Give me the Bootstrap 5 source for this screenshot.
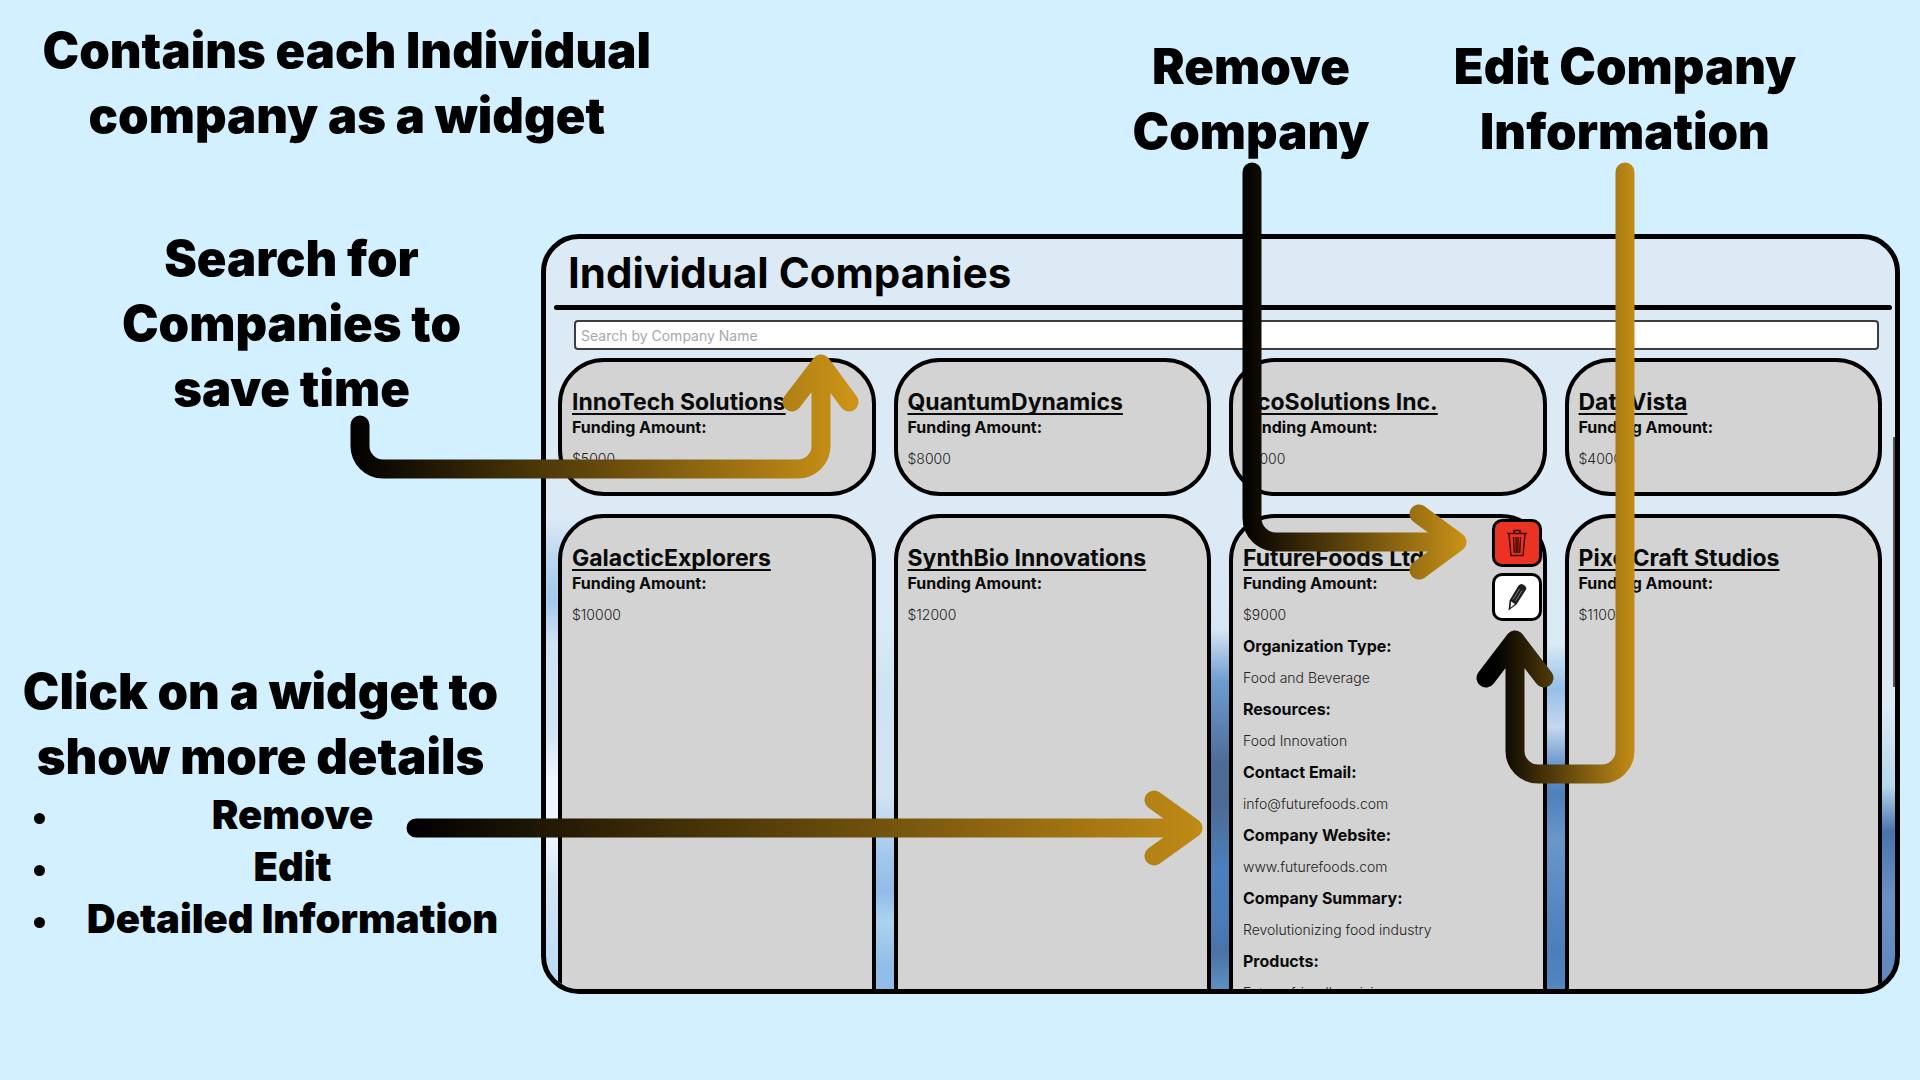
<!DOCTYPE html>
<html lang="en">
<head>
<meta charset="utf-8">
<meta name="viewport" content="width=device-width, initial-scale=1">
<title>Individual Companies guide</title>
<link href="https://cdn.jsdelivr.net/npm/bootstrap@5.3.0/dist/css/bootstrap.min.css" rel="stylesheet">
<style>
  body { background: #d2f0ff; color: #000; font-family: Inter, "Liberation Sans", sans-serif; }
  .callout { font-size: 49px; line-height: 65px; font-weight: 900; text-align: center; white-space: nowrap; margin: 0; }
  .guide-top { height: 226px; padding: 18px 95px 0 0; flex: none; }
  .guide-top .intro { width: 38%; }
  .guide-top .pointer { margin-top: 16px; }
  .guide-top .pointer-remove { width: 260px; }
  .guide-top .pointer-edit { width: 400px; margin-left: 44px; }
  .guide-main { min-height: 0; }
  .guide-notes { flex: 0 0 541px; }
  .note-search { padding-left: 42px; }
  .note-click { margin-top: 238px; padding-right: 20px; }
  .note-list { font-size: 40px; line-height: 52px; font-weight: 900; margin: 0; padding: 0 36px 0 80px; list-style: none; text-align: center; white-space: nowrap; }
  .note-list li { position: relative; }
  .note-list li::before { content: ""; position: absolute; left: -46px; top: 24px; width: 11px; height: 11px; border-radius: 50%; background: #000; }
  .app-panel {
    position: relative; margin: 8px 20px 86px 0; border: 5px solid #000; border-radius: 38px; overflow: hidden;
    background:
      linear-gradient(#dceaf5 0 37%, #b9d5f0 43%, #a5c8ec 48%, #cfe2f5 54%, #d3e4f6 66%, #edf5fe 72%, #edf5fe 80%, #d3e4f6 86%, #b8daf3) 0 0 / 20.1% 100% no-repeat,
      linear-gradient(#dceaf5 0 37%, #d8eaf4 52%, #cfe3f5 60%, #d3e3f4 74%, #a4c8ec 82%, #90bce7 87%, #acd3ee 91%, #90bce7 97%) 25% 0 / 20.1% 100% no-repeat,
      linear-gradient(#dceaf5 0 37%, #d6e6f4 52%, #6f9cd0 59%, #4d6c94 70%, #4d6c94 76%, #4a80bd 84%, #4a7cb9 91%, #4a72a8 95%, #5f8fc2) 50% 0 / 20.1% 100% no-repeat,
      linear-gradient(#dceaf5 0 37%, #d8eaf4 54%, #95bfe8 60%, #c5d8ee 65%, #6d98cc 70%, #4f80bb 74%, #6a96cb 80%, #4a7ebb 95%, #5486bf) 75% 0 / 20.1% 100% no-repeat,
      linear-gradient(#dceaf5 0 37%, #dceaf5 62%, #b5d7ec 73%, #4a73ab 79%, #6a92c6 88%, #5f86bd) 100% 0 / 20.1% 100% no-repeat,
      #dceaf5;
  }
  .app-title { font-size: 42px; line-height: 52px; font-weight: 700; margin: 0; padding: 8px 0 0 22px; }
  .app-rule { height: 5px; border-radius: 3px; background: #000; margin: 6px 3px 10px 8px; }
  .search-box { height: 30px; border: 2px solid #3c3f42; border-radius: 4px; font-size: 14px; line-height: 20px; padding: 0 5px; color: #000; }
  .search-wrap { padding: 0 16px 0 28px; }
  .search-box::placeholder { color: #a9a9a9; opacity: 1; }
  .widget-grid { display: grid; grid-template-columns: repeat(4, 1fr); gap: 18px; padding: 8px 13px 0 12px; }
  .widget { position: relative; background: #d3d3d3; border: 4px solid #000; border-radius: 46px; padding: 28px 10px 26px; }
  .widget h2 { font-size: 23px; line-height: 24px; font-weight: 700; text-decoration: underline; text-decoration-thickness: 2px; text-underline-offset: 3px; text-decoration-skip-ink: none; margin: 0 0 5px; color: #0a0a0a; white-space: nowrap; }
  .widget dt { font-size: 16px; line-height: 16px; font-weight: 700; margin: 0 0 16px; color: #0a0a0a; }
  .widget dd { font-size: 14px; line-height: 15px; font-weight: 300; margin: 0 0 16px; color: #222; }
  .widget dl { margin: 0; }
  .widget dd:last-child { margin: 0; }
  .widget-open { padding-bottom: 60px; }
  .widget-tools { position: absolute; top: 1px; right: 1px; gap: 6px; }
  .tool { width: 50px; height: 48px; border: 3px solid #000; border-radius: 10px; padding: 0; display: flex; align-items: center; justify-content: center; }
  .tool-remove { background: #ea3323; }
  .tool-edit { background: #fff; }
  .scroll-mark { position: absolute; right: 0; top: 198px; width: 2px; height: 250px; background: #555; }
  .arrows { position: absolute; left: 0; top: 0; width: 1920px; height: 1080px; pointer-events: none; }
  .arrows path { fill: none; stroke-width: 19px; stroke-linecap: round; stroke-linejoin: round; }
</style>
<script src="https://cdn.jsdelivr.net/npm/bootstrap@5.3.0/dist/js/bootstrap.bundle.min.js"></script>
</head>
<body>
<div class="position-relative vh-100 d-flex flex-column overflow-hidden">
  <header class="guide-top d-flex align-items-start">
    <h2 class="callout intro">Contains each Individual<br>company as a widget</h2>
    <h2 class="callout pointer pointer-remove ms-auto">Remove<br>Company</h2>
    <h2 class="callout pointer pointer-edit">Edit Company<br>Information</h2>
  </header>
  <div class="guide-main d-flex flex-grow-1">
    <aside class="guide-notes">
      <h2 class="callout note-search">Search for<br>Companies to<br>save time</h2>
      <h2 class="callout note-click">Click on a widget to<br>show more details</h2>
      <ul class="note-list">
        <li>Remove</li>
        <li>Edit</li>
        <li>Detailed Information</li>
      </ul>
    </aside>
    <main class="app-panel flex-grow-1">
      <h1 class="app-title">Individual Companies</h1>
      <div class="app-rule"></div>
      <div class="search-wrap">
        <input class="search-box d-block w-100" type="search" placeholder="Search by Company Name" aria-label="Search by Company Name">
      </div>
      <div class="widget-grid">
        <article class="widget"><h2>InnoTech Solutions</h2><dl><dt>Funding Amount:</dt><dd>$5000</dd></dl></article>
        <article class="widget"><h2>QuantumDynamics</h2><dl><dt>Funding Amount:</dt><dd>$8000</dd></dl></article>
        <article class="widget"><h2>EcoSolutions Inc.</h2><dl><dt>Funding Amount:</dt><dd>$7000</dd></dl></article>
        <article class="widget"><h2>DataVista</h2><dl><dt>Funding Amount:</dt><dd>$4000</dd></dl></article>
        <article class="widget"><h2>GalacticExplorers</h2><dl><dt>Funding Amount:</dt><dd>$10000</dd></dl></article>
        <article class="widget"><h2>SynthBio Innovations</h2><dl><dt>Funding Amount:</dt><dd>$12000</dd></dl></article>
        <article class="widget widget-open">
          <h2>FutureFoods Ltd.</h2>
          <dl>
            <dt>Funding Amount:</dt><dd>$9000</dd>
            <dt>Organization Type:</dt><dd>Food and Beverage</dd>
            <dt>Resources:</dt><dd>Food Innovation</dd>
            <dt>Contact Email:</dt><dd>info@futurefoods.com</dd>
            <dt>Company Website:</dt><dd>www.futurefoods.com</dd>
            <dt>Company Summary:</dt><dd>Revolutionizing food industry</dd>
            <dt>Products:</dt><dd>Future-friendly cuisine</dd>
          </dl>
          <div class="widget-tools d-flex flex-column">
            <button class="tool tool-remove" type="button" aria-label="Remove company">
              <svg width="20" height="28" viewBox="0 0 20 28" fill="none" stroke="#3a0805" stroke-width="1.400"><path d="M0 4.500h20M7 4V1.500h6V4M2 5l2 21.500h12L18 5M6.500 8l.8 16M9 8l.2 16M11 8l-.2 16M13.500 8l-.8 16"/></svg>
            </button>
            <button class="tool tool-edit" type="button" aria-label="Edit company">
              <svg width="20" height="28" viewBox="0 0 20 28"><path d="M11.500 2.500q3-3 6 0 2.500 1.500 1.500 4L9.500 21.500l-8 6L2.500 17.500z" fill="#1c1c1c"/><path d="M4 18.500l4 2.600-4.500 3.600z" fill="#fff"/><path d="M6 16.500l6.500-10.500M8.500 18l6.500-10.500" stroke="#999" stroke-width=".8"/></svg>
            </button>
          </div>
        </article>
        <article class="widget"><h2>PixelCraft Studios</h2><dl><dt>Funding Amount:</dt><dd>$11000</dd></dl></article>
      </div>
      <div class="scroll-mark"></div>
    </main>
  </div>
  <svg class="arrows" viewBox="0 0 1920 1080" aria-hidden="true">
    <defs>
      <linearGradient id="gSearch" gradientUnits="userSpaceOnUse" x1="350" y1="0" x2="850" y2="0"><stop offset="0" stop-color="#000"/><stop offset="1" stop-color="#cb9317"/></linearGradient>
      <linearGradient id="gRemove" gradientUnits="userSpaceOnUse" x1="1242" y1="0" x2="1467" y2="0"><stop offset="0" stop-color="#000"/><stop offset="1" stop-color="#cb9317"/></linearGradient>
      <linearGradient id="gEdit" gradientUnits="userSpaceOnUse" x1="1495" y1="0" x2="1640" y2="0"><stop offset="0" stop-color="#000"/><stop offset="1" stop-color="#cb9317"/></linearGradient>
      <linearGradient id="gClick" gradientUnits="userSpaceOnUse" x1="407" y1="0" x2="1250" y2="0"><stop offset="0" stop-color="#000"/><stop offset="1" stop-color="#cb9317"/></linearGradient>
    </defs>
    <path stroke="url(#gSearch)" d="M360 425V446a23 23 0 0 0 23 23H798a23 23 0 0 0 23-23V364M792 402L821 364L849 402"/>
    <path stroke="url(#gRemove)" d="M1252 172V518a24 24 0 0 0 24 24H1457M1419 514L1457 542L1419 570"/>
    <path stroke="url(#gEdit)" d="M1625 172V751a23 23 0 0 1-23 23H1538a23 23 0 0 1-23-23V640M1486 678L1515 640L1544 678"/>
    <path stroke="url(#gClick)" d="M416 828H1193M1154 800L1193 828L1154 856"/>
  </svg>
</div>
</body>
</html>
